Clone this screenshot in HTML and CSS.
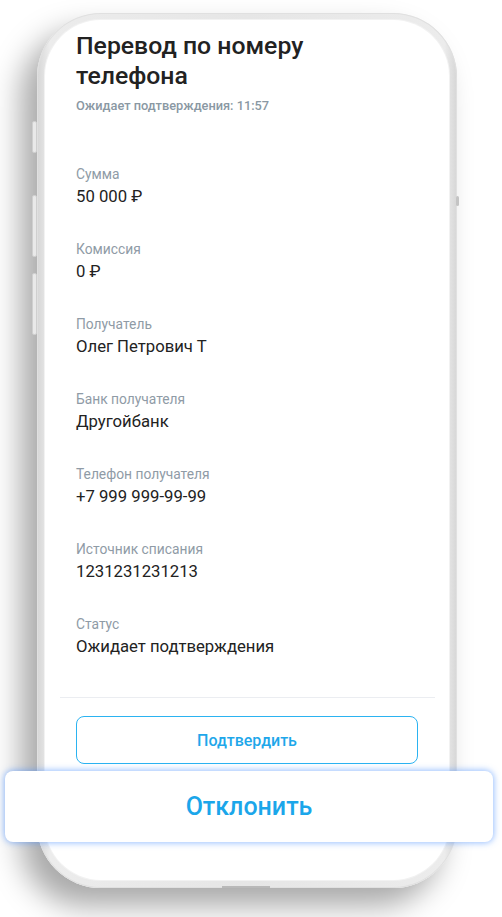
FILE: index.html
```html
<!DOCTYPE html>
<html lang="ru">
<head>
  <meta charset="UTF-8">
  <meta name="viewport" content="width=device-width, initial-scale=1.0">
  <title>Перевод по номеру телефона</title>
  <link rel="stylesheet" href="styles.css">
</head>
<body>
  <div class="stage">
    <div class="phone">
      <!-- side buttons -->
      <span class="side-btn side-btn-mute"></span>
      <span class="side-btn side-btn-up"></span>
      <span class="side-btn side-btn-down"></span>
      <span class="side-dot"></span>
      <span class="bottom-slot"></span>

      <div class="screen">
        <h1 class="title">Перевод по номеру телефона</h1>
        <div class="subtitle">Ожидает подтверждения: 11:57</div>

        <div class="fields">
          <div class="field">
            <div class="field-label">Сумма</div>
            <div class="field-value">50 000 ₽</div>
          </div>
          <div class="field">
            <div class="field-label">Комиссия</div>
            <div class="field-value">0 ₽</div>
          </div>
          <div class="field">
            <div class="field-label">Получатель</div>
            <div class="field-value">Олег Петрович Т</div>
          </div>
          <div class="field">
            <div class="field-label">Банк получателя</div>
            <div class="field-value">Другойбанк</div>
          </div>
          <div class="field">
            <div class="field-label">Телефон получателя</div>
            <div class="field-value">+7 999 999-99-99</div>
          </div>
          <div class="field">
            <div class="field-label">Источник списания</div>
            <div class="field-value">1231231231213</div>
          </div>
          <div class="field">
            <div class="field-label">Статус</div>
            <div class="field-value">Ожидает подтверждения</div>
          </div>
        </div>

        <div class="divider"></div>

        <div class="actions">
          <button type="button" class="confirm-button">Подтвердить</button>
        </div>
      </div>
    </div>

    <!-- highlighted action over the phone -->
    <button type="button" class="reject-card">Отклонить</button>
  </div>
</body>
</html>
```

FILE: styles.css
```css
body {
  margin: 0;
  background: #ffffff;
  font-family: Roboto, "Noto Sans", Arial, sans-serif;
  color: #222222;
}
.stage {
  position: relative;
  width: 502px;
  height: 917px;
  overflow: hidden;
  padding-top: 13px;
  box-sizing: border-box;
}
.phone {
  position: relative;
  margin-left: 37px;
  width: 420px;
  height: 875px;
  box-sizing: border-box;
  padding: 7px 8px 8px 8px;
  border-radius: 64px;
  background: linear-gradient(90deg, #d6d6d6 0%, #ececec 3%, #e6e6e6 50%, #ececec 97%, #d6d6d6 100%);
  box-shadow: -16px 18px 30px rgba(0, 0, 0, 0.34), inset 0 0 0 1px #e0e0e0;
}
.screen {
  height: 100%;
  background: #ffffff;
  border-radius: 56px;
  overflow: hidden;
  padding: 11px 31px 0 31px;
  box-sizing: border-box;
  box-shadow: 0 0 0 1px #f2f2f2;
}
.side-btn {
  position: absolute;
  left: -5px;
  width: 3px;
  border-radius: 2px;
  background: #e9e9e9;
  border: 1px solid #cfcfcf;
}
.side-btn-mute {
  top: 108px;
  height: 30px;
}
.side-btn-up {
  top: 182px;
  height: 60px;
}
.side-btn-down {
  top: 260px;
  height: 60px;
}
.side-dot {
  position: absolute;
  right: -2px;
  top: 183px;
  width: 3px;
  height: 10px;
  border-radius: 2px;
  background: #c4c4c4;
}
.bottom-slot {
  position: absolute;
  left: 185px;
  bottom: 0;
  width: 48px;
  height: 2px;
  background: #b9b9b9;
}
.title {
  margin: 0;
  font-size: 24.8px;
  line-height: 30px;
  font-weight: 500;
  color: #222222;
  width: 270px;
}
.subtitle {
  margin-top: 7px;
  font-size: 12.8px;
  line-height: 16px;
  font-weight: 500;
  color: #8a98a3;
}
.fields {
  margin-top: 52px;
}
.field {
  margin-bottom: 34px;
}
.field:last-child {
  margin-bottom: 0;
}
.field-label {
  font-size: 13.8px;
  line-height: 16px;
  color: #8f9ba6;
}
.field-value {
  margin-top: 5px;
  font-size: 16.7px;
  line-height: 20px;
  color: #222222;
}
.divider {
  height: 1px;
  background: #ebedf1;
  margin: 40px -17px 0 -16px;
}
.actions {
  margin-top: 18px;
}
.confirm-button {
  display: block;
  width: 100%;
  height: 48px;
  border: 1px solid #2bb3f1;
  border-radius: 8px;
  background: #ffffff;
  font-family: Roboto, "Noto Sans", Arial, sans-serif;
  font-size: 16px;
  font-weight: 500;
  color: #1ea7ea;
  cursor: pointer;
}
.reject-card {
  position: absolute;
  left: 5px;
  top: 771px;
  width: 488px;
  height: 71px;
  border: none;
  border-radius: 8px;
  background: #ffffff;
  box-shadow: 0 0 6px 1px rgba(70, 140, 255, 0.55);
  font-family: Roboto, "Noto Sans", Arial, sans-serif;
  font-size: 25px;
  font-weight: 500;
  color: #1ba6ea;
  cursor: pointer;
}
```
